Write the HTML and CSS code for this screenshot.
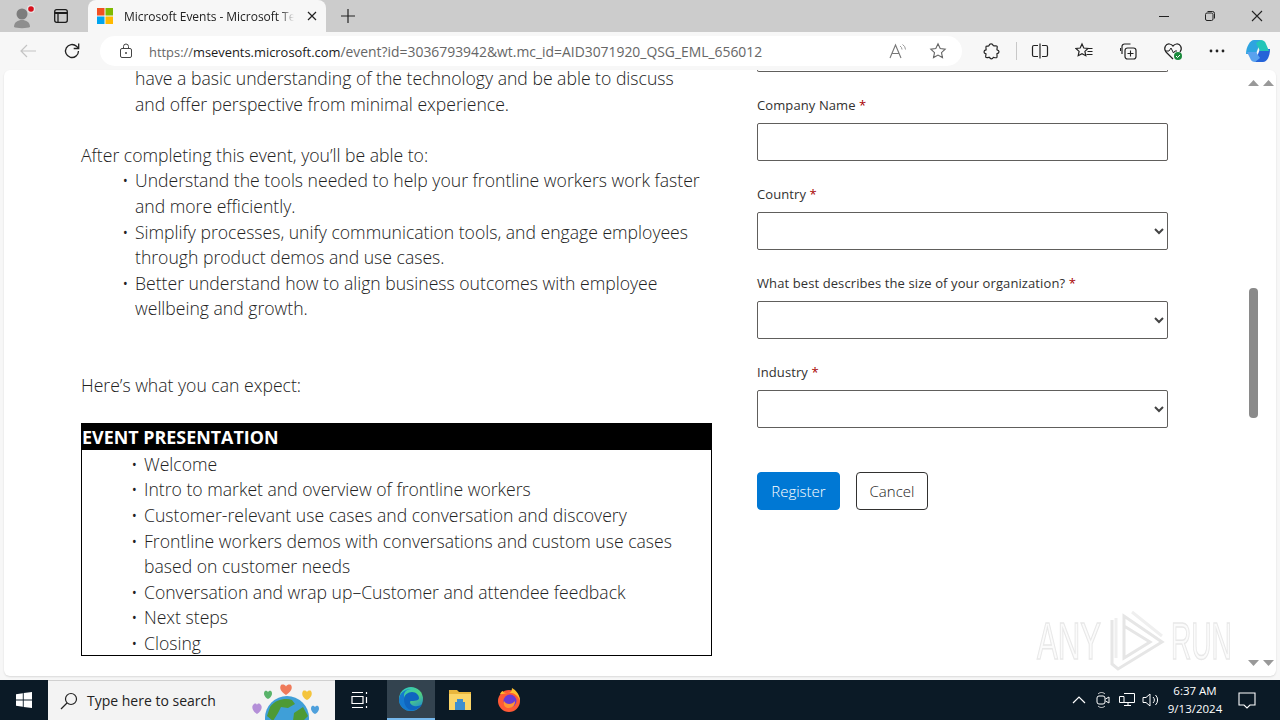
FILE: index.html
```html
<!DOCTYPE html>
<html lang="en">
<head>
<meta charset="utf-8">
<title>Microsoft Events</title>
<link rel="stylesheet" href="styles.css">
</head>
<body>
<div class="window">
  <header class="tabstrip">
    <div class="strip-left">
      <svg class="ic-profile" width="28" height="28" viewBox="0 0 28 28"><circle cx="13" cy="12" r="5.500" fill="#7d7d7d"/><path d="M5 25c0-5 4-7 8-7s8 2 8 7c-2 1.500-14 1.500-16 0z" fill="#8e8e8e"/><circle cx="22" cy="7" r="4" fill="#fff" opacity=".5"/><circle cx="22" cy="7" r="2.800" fill="#d8101c"/></svg>
      <svg class="ic-tabs" width="16" height="16" viewBox="0 0 16 16"><rect x="1.700" y="1.700" width="12.600" height="12.600" rx="2" fill="none" stroke="#1c1c1c" stroke-width="1.300"/><path d="M1.700 5h12.600" stroke="#1c1c1c" stroke-width="2"/><path d="M5 5v9" stroke="#1c1c1c" stroke-width="1.300"/></svg>
    </div>
    <div class="tab">
      <svg width="16" height="16" viewBox="0 0 16 16"><rect width="7.500" height="7.500" fill="#f25022"/><rect x="8.500" width="7.500" height="7.500" fill="#7fba00"/><rect y="8.500" width="7.500" height="7.500" fill="#00a4ef"/><rect x="8.500" y="8.500" width="7.500" height="7.500" fill="#ffb900"/></svg>
      <span class="tab-title">Microsoft Events - Microsoft Tech</span>
      <svg class="tab-x" width="10" height="10" viewBox="0 0 10 10"><path d="M1 1l8 8M9 1l-8 8" stroke="#222" stroke-width="1.200"/></svg>
    </div>
    <svg class="tab-new" width="16" height="16" viewBox="0 0 16 16"><path d="M8 1v14M1 8h14" stroke="#222" stroke-width="1.200"/></svg>
    <div class="win-controls">
      <svg width="10" height="10" viewBox="0 0 10 10"><path d="M0 5.500h10" stroke="#222"/></svg>
      <svg width="10" height="10" viewBox="0 0 10 10"><rect x=".5" y="2" width="7.500" height="7.500" rx="1.500" fill="none" stroke="#222"/><path d="M2.500 .5h5a2 2 0 0 1 2 2v5" fill="none" stroke="#222"/></svg>
      <svg width="12" height="12" viewBox="0 0 12 12"><path d="M1 1l10 10M11 1l-10 10" stroke="#222" stroke-width="1.100"/></svg>
    </div>
  </header>
  <nav class="toolbar">
    <svg class="nav-back" width="18" height="16" viewBox="0 0 18 16"><path d="M17 8H2M8 2L2 8l6 6" fill="none" stroke="#c4c4c4" stroke-width="1.200"/></svg>
    <svg class="nav-reload" width="18" height="18" viewBox="0 0 18 18"><path d="M15.500 9a6.500 6.500 0 1 1-2-4.700L15.500 6.200" fill="none" stroke="#222" stroke-width="1.300"/><path d="M15.700 1.500v5h-5" fill="none" stroke="#222" stroke-width="1.300"/></svg>
    <div class="address">
      <svg width="14" height="16" viewBox="0 0 14 16"><rect x="1.500" y="5.500" width="11" height="9" rx="1.500" fill="none" stroke="#444"/><path d="M4.500 5.500V3.500a2.500 2.500 0 0 1 5 0v2" fill="none" stroke="#444"/><circle cx="7" cy="10" r="1" fill="#444"/></svg>
      <span class="url"><span class="url-dim">https://</span>msevents.microsoft.com<span class="url-dim url-path">/event?id=3036793942&amp;wt.mc_id=AID3071920_QSG_EML_656012</span></span>
      <span class="addr-end">
        <svg width="18" height="16" viewBox="0 0 18 16"><path d="M1 15L6.500 2 12 15M3 10.500h7" fill="none" stroke="#777" stroke-width="1.100"/><path d="M11 3a4 4 0 0 1 2 3.500M13.500 1.500a6 6 0 0 1 3 5" fill="none" stroke="#999"/></svg>
        <svg width="18" height="18" viewBox="0 0 18 18"><path d="M9 1.800l2.200 4.700 5 .6-3.700 3.500 1 5L9 13.100l-4.500 2.500 1-5L1.800 7.100l5-.6z" fill="none" stroke="#666" stroke-width="1.100"/></svg>
      </span>
    </div>
    <div class="tools">
      <svg width="18" height="18" viewBox="0 0 18 18"><path d="M7 3.500a2.200 2.200 0 0 1 4.200 0c.2.900 3.300-.3 3.900.7.500.9-.4 3.100-.1 3.600.8.200 2 .7 2 1.900s-1.300 1.800-2 1.900c-.2.500.4 3.300-.2 3.900-.7.600-3-.1-3.500-.1-.3.700-.8 1.400-1.900 1.400s-1.700-.9-1.900-1.500c-.5 0-2.900.7-3.600.1-.6-.6.100-3 .1-3.500-.7-.2-2-.7-2-2s1.300-1.900 2.100-2c.2-.5-.6-3 .1-3.600.7-.6 3.100.3 2.800-.8z" fill="none" stroke="#222" stroke-width="1.200"/></svg>
      <span class="tool-sep"></span>
      <svg width="18" height="18" viewBox="0 0 18 18"><path d="M7 3.500H3a1.500 1.500 0 0 0-1.500 1.500v8A1.500 1.500 0 0 0 3 14.500h4M11 3.500h4A1.500 1.500 0 0 1 16.500 5v8a1.500 1.500 0 0 1-1.500 1.500h-4M9 1.500v15" fill="none" stroke="#222" stroke-width="1.200"/></svg>
      <svg width="18" height="18" viewBox="0 0 18 18"><path d="M7 2l1.800 4 4.200.5-3.100 2.900.9 4.300L7 11.600l-3.800 2.100.9-4.300L1 6.500 5.200 6z" fill="none" stroke="#222" stroke-width="1.200"/><path d="M12.500 6.500h5M12.500 9.500h5M11.500 12.500h6" stroke="#222" stroke-width="1.100"/></svg>
      <svg width="18" height="18" viewBox="0 0 18 18"><path d="M3 12V4.500A2.500 2.500 0 0 1 5.500 2h6" fill="none" stroke="#222" stroke-width="1.200"/><path d="M1.500 9V6" stroke="#222"/><rect x="6" y="6" width="11" height="11" rx="2.500" fill="none" stroke="#222" stroke-width="1.200"/><path d="M11.500 8.500v6M8.500 11.500h6" stroke="#222" stroke-width="1.100"/></svg>
      <svg width="20" height="20" viewBox="0 0 20 20"><path d="M10 18L3 11C0 7 3 2.500 6.500 3 8.500 3.300 10 5 10 5s1.500-1.700 3.500-2c3.500-.5 6.500 4 3.500 8" fill="none" stroke="#222" stroke-width="1.200"/><path d="M2 10h4l2-3 2.500 5 1.500-2h2" fill="none" stroke="#222"/><circle cx="15" cy="15" r="4" fill="#1a8a3c"/><path d="M13 15l1.500 1.500L17 14" fill="none" stroke="#fff"/></svg>
      <svg width="16" height="4" viewBox="0 0 16 4"><circle cx="2" cy="2" r="1.400" fill="#222"/><circle cx="8" cy="2" r="1.400" fill="#222"/><circle cx="14" cy="2" r="1.400" fill="#222"/></svg>
      <svg class="copilot" width="26" height="24" viewBox="0 0 26 24"><path d="M9 1h7l-5 14H1C1 8 5 1 9 1z" fill="#2ea4e0"/><path d="M10 23h8c4 0 7-6 7-13H15z" fill="#2563d8"/><path d="M16 1c2 0 4 1 5 4l3 7h-9L11 4z" fill="#23c5b8"/><path d="M10 23c-2 0-4-1-5-4l-3-6h9l4 6z" fill="#5aa2ee"/></svg>
    </div>
  </nav>
  <main class="viewport">
    <div class="page">
      <section class="article">
        <ul class="bullets intro">
          <li class="cont">have a basic understanding of the technology and be able to discuss<br>and offer perspective from minimal experience.</li>
        </ul>
        <p class="lead">After completing this event, you’ll be able to:</p>
        <ul class="bullets">
          <li>Understand the tools needed to help your frontline workers work faster and more efficiently.</li>
          <li>Simplify processes, unify communication tools, and engage employees through product demos and use cases.</li>
          <li>Better understand how to align business outcomes with employee wellbeing and growth.</li>
        </ul>
        <p class="lead lead-far">Here’s what you can expect:</p>
        <div class="agenda">
          <div class="agenda-head">EVENT PRESENTATION</div>
          <ul class="agenda-list">
            <li>Welcome</li>
            <li>Intro to market and overview of frontline workers</li>
            <li>Customer-relevant use cases and conversation and discovery</li>
            <li>Frontline workers demos with conversations and custom use cases based on customer needs</li>
            <li>Conversation and wrap up–Customer and attendee feedback</li>
            <li>Next steps</li>
            <li>Closing</li>
          </ul>
        </div>
      </section>
      <form class="form">
        <div class="stub"></div>
        <div class="field"><label class="label">Company Name <em>*</em></label><input class="control" type="text"></div>
        <div class="field"><label class="label">Country <em>*</em></label><select class="control"><option></option></select></div>
        <div class="field"><label class="label">What best describes the size of your organization? <em>*</em></label><select class="control"><option></option></select></div>
        <div class="field"><label class="label">Industry <em>*</em></label><select class="control"><option></option></select></div>
        <div class="actions">
          <button class="btn btn-primary" type="button">Register</button>
          <button class="btn" type="button">Cancel</button>
        </div>
      </form>
    </div>
    <div class="scrollbars">
      <div class="scroll-col">
        <svg width="11" height="6" viewBox="0 0 11 6"><path d="M5.500 0L11 6H0z" fill="#999"/></svg>
        <div class="thumb-track"><div class="thumb"></div></div>
        <svg width="11" height="6" viewBox="0 0 11 6"><path d="M5.500 6L11 0H0z" fill="#999"/></svg>
      </div>
      <div class="scroll-col">
        <svg width="11" height="6" viewBox="0 0 11 6"><path d="M5.500 0L11 6H0z" fill="#999"/></svg>
        <svg width="11" height="6" viewBox="0 0 11 6"><path d="M5.500 6L11 0H0z" fill="#999"/></svg>
      </div>
    </div>
  </main>
  <footer class="taskbar">
    <div class="start"><svg width="16" height="16" viewBox="0 0 16 16"><path d="M0 2.200L6.800 1.200V7.500H0zM7.700 1.100L16 0V7.500H7.700zM0 8.400H6.800V14.800L0 13.800zM7.700 8.400H16V16L7.700 14.900z" fill="#fff"/></svg></div>
    <div class="search">
      <svg width="18" height="18" viewBox="0 0 18 18"><circle cx="11" cy="7" r="5.500" fill="none" stroke="#222" stroke-width="1.200"/><path d="M7 11l-6 6" stroke="#222" stroke-width="1.300"/></svg>
      <span class="search-text">Type here to search</span>
      <svg class="search-art" width="84" height="40" viewBox="0 0 84 40">
        <path d="M7 33c-5-3-6-8-3-10 1.500-1 3 0 3 1 0-1 1.500-2 3-1 3 2 2 7-3 10z" fill="#b48fd8"/>
        <path d="M18 18c-4-2-5-6-3-8 1-.8 2.500 0 3 1 .5-1 2-1.800 3-1 2 2 1 6-3 8z" fill="#59b36a"/>
        <path d="M36 14c-5-3-7-7-5-10 1.500-1 4-.5 5 1.500 1-2 3.500-2.500 5-1.500 2 3 0 7-5 10z" fill="#ef7a5a"/>
        <path d="M57 19c-4-2-6-6-4-9 1-.8 3-.5 4 1 1-1.500 3-1.800 4-1 2 3 0 7-4 9z" fill="#f4c43c"/>
        <path d="M65 33c-4-2-5-6-3-8 1-.8 2.500 0 3 1 .5-1 2-1.800 3-1 2 2 1 6-3 8z" fill="#4ea0dc"/>
        <circle cx="37" cy="37" r="22" fill="#3f9fd8"/>
        <path d="M20 26c6-8 16-9 22-7l3 4-7 4-7-1-3 6-5 8-6-5zM44 32l9-6 5 9-5 5h-10z" fill="#4e9a36"/>
      </svg>
    </div>
    <div class="task-item"><svg width="18" height="18" viewBox="0 0 18 18"><path d="M1 1.500h11M1 16.500h11M1 5.500h11v7H1zM15.500 1v2M15.500 6v6M15.500 15v2" fill="none" stroke="#fff" stroke-width="1.200"/></svg></div>
    <div class="task-item task-active"><svg width="26" height="26" viewBox="0 0 26 26"><defs><linearGradient id="eg" x1=".2" y1="0" x2=".8" y2="1"><stop offset="0" stop-color="#2fc7c0"/><stop offset=".5" stop-color="#52d27e"/><stop offset="1" stop-color="#1b86d4"/></linearGradient></defs><circle cx="13" cy="13" r="12" fill="url(#eg)"/><path d="M1 14C1 7 7 3 13 3c-6 1-7 4-7 7 0 7 5 14 13 13-2 1-4 2-6 2-7 0-12-5-12-11z" fill="#1579cf"/><path d="M6 13c0-4 4-7 8-7 4 0 7 3 7 6 0 2-2 3-8 3-2 0-1 4 3 5 3 .6 6 0 8-2-2 4-6 6-10 6-5 0-8-5-8-11z" fill="#0f65c0"/></svg></div>
    <div class="task-item"><svg width="24" height="22" viewBox="0 0 24 22"><path d="M1 1h8l2 2h12v18H1z" fill="#e9b63d"/><rect x="1" y="5" width="22" height="16" fill="#fbd568"/><rect x="7" y="13" width="10" height="8" fill="#3f8fcf"/><rect x="9" y="10" width="6" height="3" fill="#3f8fcf"/></svg></div>
    <div class="task-item"><svg width="24" height="24" viewBox="0 0 24 24"><circle cx="12" cy="13" r="11" fill="#ff5a36"/><path d="M3 6c1-2 2-3 3-3 0 2 3 2 7 2 1-1 2-3 2-5 4 2 8 7 8 13C21 7 16 4 11 5 7 5 4 7 3 6z" fill="#ffbd2e"/><circle cx="13" cy="13" r="6.500" fill="#6a3bd6"/><path d="M7 13c2 4 8 4 11 0 0 4-2 7-6 7s-6-3-5-7z" fill="#ff9533"/></svg></div>
    <div class="tray">
      <div class="tray-ic"><svg width="14" height="8" viewBox="0 0 14 8"><path d="M1 7l6-6 6 6" fill="none" stroke="#fff" stroke-width="1.200"/></svg></div>
      <div class="tray-ic"><svg width="14" height="18" viewBox="0 0 14 18"><path d="M2 3c2-2 5-2 7 0M2 15c2 2 5 2 7 0" fill="none" stroke="#ddd"/><rect x="1" y="5" width="8" height="8" rx="2" fill="none" stroke="#fff"/><path d="M9.500 8L13 6v6L9.500 10" fill="none" stroke="#fff"/></svg></div>
      <div class="tray-ic"><svg width="16" height="16" viewBox="0 0 16 16"><path d="M5 1.500h10.500v9H5M5 13.500h7M9 10.500v3M.5 4.500h4.500v6H.5z" fill="none" stroke="#fff"/></svg></div>
      <div class="tray-ic"><svg width="18" height="16" viewBox="0 0 18 16"><path d="M1 5.500h3L8 2v12L4 10.500H1z" fill="none" stroke="#fff"/><path d="M11 5a4 4 0 0 1 0 6M13.500 3a7 7 0 0 1 0 10" fill="none" stroke="#fff"/></svg></div>
      <div class="clock"><span>6:37 AM</span><span>9/13/2024</span></div>
      <svg class="notif" width="18" height="17" viewBox="0 0 18 17"><path d="M1 1h16v12h-5l-3 3-3-3H1z" fill="none" stroke="#fff" stroke-width="1.100"/></svg>
    </div>
  </footer>
  <div class="watermark">
    <span class="wm-text wm-any">ANY</span>
    <svg width="58" height="62" viewBox="0 0 58 62"><path d="M4 10v44l6 5 44-27L16 6v10l26 16-26 16V12" fill="none" stroke="#e6e6e6" stroke-width="3"/><path d="M24 2l30 24M8 8v40" fill="none" stroke="#efefef" stroke-width="3"/></svg>
    <span class="wm-text wm-run">RUN</span>
  </div>
</div>
</body>
</html>
```
FILE: styles.css
```css
* { box-sizing: border-box; }
html, body { margin: 0; padding: 0; }
body { width: 1280px; height: 720px; overflow: hidden; font-family: "Open Sans", "Noto Sans", sans-serif; background: #f7f7f7; }
svg { display: block; flex: none; }
.window { position: relative; display: flex; flex-direction: column; width: 1280px; height: 720px; background: #f7f7f7; }

.tabstrip { display: flex; align-items: center; height: 32px; background: #cccccc; flex: none; }
.strip-left { display: flex; align-items: center; width: 88px; height: 32px; padding-left: 9px; }
.ic-tabs { margin-left: 16px; }
.tab { display: flex; align-items: center; width: 238px; height: 32px; padding: 0 9px; background: #f7f7f7; border-radius: 8px 8px 0 0; }
.tab-title { width: 173px; margin-left: 11px; overflow: hidden; white-space: nowrap; font-size: 12px; letter-spacing: -.03px; color: #222; -webkit-mask-image: linear-gradient(90deg, #000 92%, transparent); mask-image: linear-gradient(90deg, #000 92%, transparent); }
.tab-x { margin-left: 13px; }
.tab-new { margin-left: 14px; }
.win-controls { display: flex; align-items: center; gap: 36px; height: 32px; margin-left: auto; padding-right: 17px; }

.toolbar { display: flex; align-items: center; height: 38px; flex: none; background: #f7f7f7; padding-left: 19px; }
.nav-reload { margin-left: 26px; }
.address { display: flex; flex: none; align-items: center; width: 862px; height: 30px; margin-left: 19px; padding: 0 15px 0 19px; background: #fff; border-radius: 15px; }
.url { margin-left: 16px; font-size: 12.900px; color: #1a1a1a; white-space: nowrap; }
.url-dim { color: #666; }
.url-path { font-size: 13.900px; }
.addr-end { display: flex; align-items: center; gap: 22px; margin-left: auto; }
.tools { display: flex; flex: none; align-items: center; gap: 26px; margin-left: 20px; }
.tool-sep { width: 1px; height: 18px; margin: 0 -12px 0 -10px; background: #c8c8c8; }
.copilot { margin-left: -6px; }

.viewport { display: flex; flex: none; height: 606px; margin: 0 4px; background: #fff; border-radius: 6px; overflow: hidden; box-shadow: 0 1px 2px rgba(0,0,0,.12); }
.page { display: flex; flex: 1; min-width: 0; padding-left: 77px; color: #222; }

.article { width: 631px; margin-top: -4px; font-size: 17.600px; font-weight: 300; line-height: 25.600px; }
.bullets { margin: 0; padding: 0 0 0 54px; list-style: none; }
.bullets li { position: relative; }
.bullets li::before, .agenda-list li::before { content: "•"; position: absolute; left: -13px; }
.bullets li.cont::before { content: none; }
.lead { margin: 25.600px 0 0; }
.lead-far { margin-top: 51.200px; }
.agenda { margin-top: 24px; border: 1px solid #000; height: 233px; }
.agenda-head { height: 26px; background: #000; color: #fff; font-weight: 700; line-height: 27px; font-size: 17.900px; }
.agenda-list { margin: 0; padding: 2px 30px 0 62px; list-style: none; }
.agenda-list li { position: relative; }

.form { display: flex; flex-direction: column; width: 411px; margin-left: 45px; }
.stub { height: 2px; border: 1px solid #605e5c; border-top: 0; border-radius: 0 0 2px 2px; }
.field { display: flex; flex-direction: column; height: 89px; padding-top: 24px; }
.label { display: block; height: 27px; font-size: 13px; line-height: 18px; color: #323130; letter-spacing: .1px; }
.label em { font-style: normal; color: #a80000; }
.control { display: block; width: 411px; height: 38px; flex: none; padding: 0 6px; background: #fff; color: #444; border: 1px solid #605e5c; border-radius: 2px; }
.actions { display: flex; gap: 16px; margin-top: 44px; }
.btn { width: 72px; height: 38px; padding: 0; background: #fff; border: 1px solid #323130; border-radius: 4px; font-family: inherit; font-size: 15px; font-weight: 300; color: #222; }
.btn-primary { width: 83px; background: #0078d4; border-color: #0078d4; color: #fff; }

.scrollbars { display: flex; flex: none; width: 30px; padding: 10px 2px 10px 0; gap: 4px; justify-content: flex-end; }
.scroll-col { display: flex; flex-direction: column; justify-content: space-between; align-items: center; width: 11px; }
.thumb-track { display: flex; justify-content: center; flex: 1; width: 11px; padding-top: 202px; }
.thumb { width: 9px; height: 130px; background: #8a8a8a; border-radius: 4px; }

.taskbar { display: flex; align-items: stretch; height: 40px; margin-top: auto; background: #0b1a26; }
.start { display: flex; align-items: center; justify-content: center; width: 48px; }
.search { display: flex; align-items: center; width: 287px; padding-left: 12px; background: #f3f3f3; overflow: hidden; border-top: 1px solid #d0d0d0; }
.search-text { margin-left: 9px; font-size: 14px; color: #222; }
.search-art { margin-left: auto; margin-right: 1px; }
.task-item { display: flex; align-items: center; justify-content: center; width: 48px; margin-left: 1px; }
.task-active { margin-left: 3px; background: #33434f; border-bottom: 2px solid #76b9ed; }
.tray { display: flex; align-items: center; margin-left: auto; padding-right: 24px; color: #fff; }
.tray-ic { display: flex; justify-content: center; width: 24px; }
.clock { display: flex; flex-direction: column; align-items: center; width: 64px; font-size: 11.500px; line-height: 18px; }
.notif { margin-left: 11px; }

.watermark { position: absolute; left: 1037px; top: 610px; display: flex; align-items: center; gap: 5px; width: 196px; height: 62px; filter: blur(.4px); }
.wm-text { display: block; width: 66px; height: 62px; transform-origin: 0 50%; font-family: "Liberation Sans", sans-serif; font-size: 52px; line-height: 62px; color: #fbfbfb; -webkit-text-stroke: 1.500px #e8e8e8; }
.wm-any { transform: scaleX(.6); }
.wm-run { width: 62px; transform: scaleX(.54); }
```
